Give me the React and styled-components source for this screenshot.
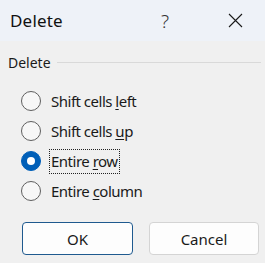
import React, { useState } from "react";
import styled, { createGlobalStyle } from "styled-components";

const GlobalStyle = createGlobalStyle`
  html, body {
    margin: 0;
    padding: 0;
    background: #f0f0f0;
  }
  body {
    font-family: "Noto Sans", "Open Sans", sans-serif;
    color: #1a1a1a;
  }
`;

const options = [
  { id: "left", before: "Shift cells ", key: "l", after: "eft" },
  { id: "up", before: "Shift cells ", key: "u", after: "p" },
  { id: "row", before: "Entire ", key: "r", after: "ow" },
  { id: "column", before: "Entire ", key: "c", after: "olumn" },
];

function App() {
  const [choice, setChoice] = useState("row");

  return (
    <>
      <GlobalStyle />
      <Dialog>
        <TitleBar>
          <Title>Delete</Title>
          <CaptionButton>?</CaptionButton>
          <CaptionButton $close>
            <svg width="15" height="15" viewBox="0 0 15 15">
              <path d="M1 1 L14 14 M14 1 L1 14" stroke="#1a1a1a" strokeWidth="1.1" fill="none" />
            </svg>
          </CaptionButton>
        </TitleBar>

        <Body>
          <Legend>
            <span>Delete</span>
            <Rule />
          </Legend>

          <OptionList>
            {options.map((o) => (
              <Option key={o.id} onClick={() => setChoice(o.id)}>
                <Radio $checked={choice === o.id} />
                <OptionLabel $focused={choice === o.id}>
                  {o.before}
                  <u>{o.key}</u>
                  {o.after}
                </OptionLabel>
              </Option>
            ))}
          </OptionList>

          <ButtonRow>
            <Button $primary>OK</Button>
            <Button>Cancel</Button>
          </ButtonRow>
        </Body>
      </Dialog>
    </>
  );
}

export default App;

const Dialog = styled.div`
  width: 265px;
  height: 263px;
  display: flex;
  flex-direction: column;
  background: #f0f0f0;
  overflow: hidden;
`;

const TitleBar = styled.div`
  height: 41px;
  flex-shrink: 0;
  display: flex;
  align-items: center;
  padding: 0 15px 0 10px;
  background: #eef2f8;
`;

const Title = styled.div`
  flex: 1;
  font-size: 17px;
  letter-spacing: 0.2px;
  color: #111;
`;

const CaptionButton = styled.div`
  width: 30px;
  height: 30px;
  display: flex;
  align-items: center;
  justify-content: center;
  font-size: 19px;
  font-weight: 300;
  color: #333;
  margin-left: ${(p) => (p.$close ? "40px" : "0")};
`;

const Body = styled.div`
  flex: 1;
  display: flex;
  flex-direction: column;
  padding: 12px 4px 0 8px;
`;

const Legend = styled.div`
  display: flex;
  align-items: center;
  gap: 6px;
  height: 18px;
  font-size: 14px;
  color: #1a1a1a;
`;

const Rule = styled.div`
  flex: 1;
  height: 1px;
  background: #d9d9d9;
`;

const OptionList = styled.div`
  display: flex;
  flex-direction: column;
  margin-top: 15px;
  padding-left: 13px;
`;

const Option = styled.div`
  height: 30px;
  display: flex;
  align-items: center;
  gap: 8px;
  cursor: default;
`;

const Radio = styled.span`
  box-sizing: border-box;
  width: 20px;
  height: 20px;
  border-radius: 50%;
  flex-shrink: 0;
  background: ${(p) => (p.$checked ? "#005fb8" : "#f7f7f7")};
  border: 1px solid ${(p) => (p.$checked ? "#005fb8" : "#5f5f5f")};
  display: flex;
  align-items: center;
  justify-content: center;

  &::after {
    content: "";
    width: 8px;
    height: 8px;
    border-radius: 50%;
    background: #fff;
    display: ${(p) => (p.$checked ? "block" : "none")};
  }
`;

const OptionLabel = styled.span`
  font-size: 15px;
  letter-spacing: -0.5px;
  line-height: 23px;
  padding: 0 1px;
  border: 1px dotted ${(p) => (p.$focused ? "#222" : "transparent")};

  u {
    text-underline-offset: 2px;
  }
`;

const ButtonRow = styled.div`
  display: flex;
  gap: 16px;
  margin-top: 16px;
  padding-left: 14px;
`;

const Button = styled.button`
  box-sizing: border-box;
  width: ${(p) => (p.$primary ? "111px" : "110px")};
  height: 33px;
  border-radius: 4px;
  background: #fdfdfd;
  border: 1px solid ${(p) => (p.$primary ? "#1f5a8f" : "#d4d4d4")};
  font-family: inherit;
  font-size: 15px;
  color: #1a1a1a;
`;
